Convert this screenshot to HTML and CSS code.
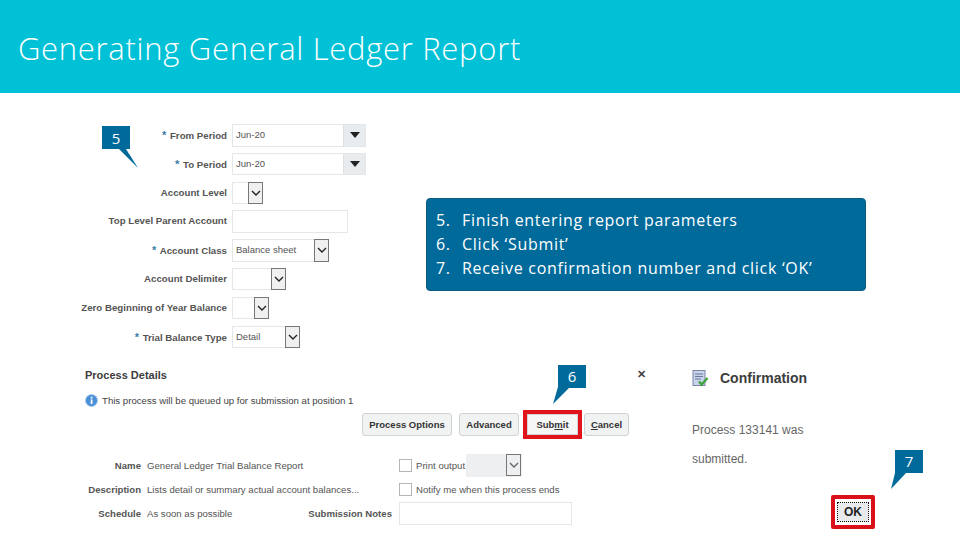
FILE: index.html
```html
<!DOCTYPE html>
<html lang="en">
<head>
    <meta charset="UTF-8">
    <title>Generating General Ledger Report</title>
    <link rel="stylesheet" href="styles.css">
</head>
<body>
    <div class="slide">
        <header class="title-bar">
            <h1>Generating General Ledger Report</h1>
        </header>

        <!-- parameters form -->
        <section class="shot params">
            <div class="param-label"><span class="req">*</span> From Period</div>
            <div class="lov w134"><span>Jun-20</span><i class="lov-btn"><svg width="10" height="6" viewBox="0 0 10 6"><path d="M0 0h10L5 6z"/></svg></i></div>
            <div class="param-label"><span class="req">*</span> To Period</div>
            <div class="lov w134"><span>Jun-20</span><i class="lov-btn"><svg width="10" height="6" viewBox="0 0 10 6"><path d="M0 0h10L5 6z"/></svg></i></div>
            <div class="param-label">Account Level</div>
            <div class="select w31"><span></span><i class="sel-btn"><svg width="10" height="6" viewBox="0 0 10 6"><path d="M1 1l4 4 4-4"/></svg></i></div>
            <div class="param-label">Top Level Parent Account</div>
            <div class="text-input w116"></div>
            <div class="param-label"><span class="req">*</span> Account Class</div>
            <div class="select w97"><span>Balance sheet</span><i class="sel-btn"><svg width="10" height="6" viewBox="0 0 10 6"><path d="M1 1l4 4 4-4"/></svg></i></div>
            <div class="param-label">Account Delimiter</div>
            <div class="select w54"><span></span><i class="sel-btn"><svg width="10" height="6" viewBox="0 0 10 6"><path d="M1 1l4 4 4-4"/></svg></i></div>
            <div class="param-label">Zero Beginning of Year Balance</div>
            <div class="select w37"><span></span><i class="sel-btn"><svg width="10" height="6" viewBox="0 0 10 6"><path d="M1 1l4 4 4-4"/></svg></i></div>
            <div class="param-label"><span class="req">*</span> Trial Balance Type</div>
            <div class="select w68"><span>Detail</span><i class="sel-btn"><svg width="10" height="6" viewBox="0 0 10 6"><path d="M1 1l4 4 4-4"/></svg></i></div>
        </section>

        <!-- steps box -->
        <div class="steps">
            <div class="step"><span class="step-num">5.</span>Finish entering report parameters</div>
            <div class="step"><span class="step-num">6.</span>Click ‘Submit’</div>
            <div class="step"><span class="step-num">7.</span>Receive confirmation number and click ‘OK’</div>
        </div>

        <!-- process details dialog -->
        <section class="shot process">
            <div class="process-head">
                <h2>Process Details</h2>
                <span class="close">✕</span>
            </div>
            <div class="info-line">
                <svg width="13" height="13" viewBox="0 0 13 13">
                    <circle cx="6.5" cy="6.5" r="6" fill="#4a90d9" stroke="#a9c8ea"/>
                    <rect x="5.7" y="5.4" width="1.8" height="4.6" fill="#fff"/>
                    <rect x="5.7" y="2.8" width="1.8" height="1.7" fill="#fff"/>
                </svg>
                <span>This process will be queued up for submission at position 1</span>
            </div>
            <div class="btn-row">
                <span class="btn b-options">Process Options</span>
                <span class="btn b-advanced">Advanced</span>
                <span class="hilite"><span class="btn b-submit">Sub<u>m</u>it</span></span>
                <span class="btn b-cancel"><u>C</u>ancel</span>
            </div>
            <div class="detail-rows">
                <div class="detail-row">
                    <label>Name</label>
                    <span class="value">General Ledger Trial Balance Report</span>
                    <i class="check"></i><span class="check-text">Print output</span>
                    <div class="print-select"><i class="sel-btn"><svg width="10" height="6" viewBox="0 0 10 6"><path d="M1 1l4 4 4-4"/></svg></i></div>
                </div>
                <div class="detail-row">
                    <label>Description</label>
                    <span class="value">Lists detail or summary actual account balances...</span>
                    <i class="check"></i><span class="check-text">Notify me when this process ends</span>
                </div>
                <div class="detail-row">
                    <label>Schedule</label>
                    <span class="value value-short">As soon as possible</span>
                    <label class="notes-label">Submission Notes</label>
                    <div class="text-input notes"></div>
                </div>
            </div>
        </section>

        <!-- confirmation dialog -->
        <section class="shot confirm">
            <div class="confirm-head">
                <svg width="17" height="17" viewBox="0 0 17 17">
                    <rect x="1" y="0.5" width="12" height="15" fill="#c9d3ea" stroke="#7a86a8"/>
                    <path d="M3 4h8M3 6.5h8M3 9h6" stroke="#6a78a0"/>
                    <path d="M7 11.5l2.6 3L15.5 8" fill="none" stroke="#3da33a" stroke-width="2.4"/>
                </svg>
                <h2>Confirmation</h2>
            </div>
            <p>Process 133141 was</p>
            <p>submitted.</p>
            <div class="ok-box"><span class="ok">OK</span></div>
        </section>

        <!-- numbered callouts -->
        <div class="callout c5">5
            <svg class="tail" width="20" height="20" viewBox="0 0 20 20"><path d="M0 0h7l12 19z"/></svg>
        </div>
        <div class="callout c6">6
            <svg class="tail" width="22" height="18" viewBox="0 0 22 18"><path d="M6 0h12L1 17z"/></svg>
        </div>
        <div class="callout c7">7
            <svg class="tail" width="22" height="18" viewBox="0 0 22 18"><path d="M5 0h11L1 16z"/></svg>
        </div>
    </div>
</body>
</html>
```

FILE: styles.css
```css
* {
    box-sizing: border-box;
}

body {
    margin: 0;
    background: #fff;
    font-family: "Liberation Sans", Arial, sans-serif;
    color: #444;
}

.slide {
    position: relative;
    width: 960px;
    height: 540px;
    overflow: hidden;
    background: #fff;
}

.title-bar {
    height: 93px;
    background: #00c1d6;
    padding: 27px 0 0 18px;
}

.title-bar h1 {
    margin: 0;
    font-family: "Open Sans", sans-serif;
    font-weight: 300;
    font-size: 31px;
    letter-spacing: 0.7px;
    line-height: 42px;
    color: #fff;
}

/* pieces of screenshot sit freely on the slide */
.shot {
    position: absolute;
}

.params {
    left: 72px;
    top: 124px;
    display: grid;
    grid-template-columns: 155px auto;
    column-gap: 5px;
    grid-auto-rows: 28.8px;
    justify-items: start;
}

.param-label {
    justify-self: end;
    font-size: 9.7px;
    font-weight: bold;
    line-height: 22px;
    color: #555;
    white-space: nowrap;
}

.req {
    color: #3a7ca5;
    font-size: 11px;
    margin-right: 1px;
}

.lov, .select, .text-input {
    display: flex;
    height: 22.5px;
    border: 1px solid #e3e7ea;
    background: #fff;
    font-size: 9.5px;
    line-height: 20px;
    color: #555;
}

.lov span, .select span {
    flex: 1;
    padding-left: 3px;
    white-space: nowrap;
}

.lov-btn {
    display: flex;
    align-items: center;
    justify-content: center;
    width: 22px;
    background: #e8ecef;
    border-left: 1px solid #dde1e4;
}

.lov-btn path {
    fill: #222;
}

.sel-btn {
    display: flex;
    align-items: center;
    justify-content: center;
    width: 15px;
    height: 22.5px;
    background: #f0f0f0;
    border: 1px solid #777;
    margin: -1px -1px -1px 0;
}

.sel-btn path {
    fill: none;
    stroke: #222;
    stroke-width: 1.4;
}

.w31 { width: 31px; }
.w37 { width: 37px; }
.w54 { width: 54px; }
.w68 { width: 68px; }
.w97 { width: 97px; }
.w116 { width: 116px; }
.w134 { width: 134px; }

.steps {
    position: absolute;
    left: 426px;
    top: 198px;
    width: 440px;
    height: 93px;
    padding: 9px 0 0 9px;
    background: #006a9b;
    border: 1px solid #0b5a80;
    border-radius: 4px;
    font-family: "Open Sans", sans-serif;
    font-size: 16px;
    letter-spacing: 0.7px;
    line-height: 24px;
    color: #fff;
}

.step {
    display: flex;
    white-space: nowrap;
}

.step-num {
    width: 26px;
    flex: none;
}

.process {
    left: 85px;
    top: 368px;
    width: 544px;
}

.process-head {
    display: flex;
    justify-content: space-between;
    height: 15px;
}

.process h2, .confirm h2 {
    margin: 0;
    font-size: 11px;
    line-height: 15px;
    color: #3c3c3c;
}

.close {
    margin-right: -17px;
    font-size: 11px;
    font-weight: bold;
    color: #444;
}

.info-line {
    display: flex;
    align-items: center;
    gap: 4px;
    margin-top: 10px;
    font-size: 9.65px;
    line-height: 15px;
}

.btn-row {
    display: flex;
    justify-content: flex-end;
    align-items: center;
    margin-top: 2px;
    height: 29px;
}

.btn {
    display: flex;
    align-items: center;
    justify-content: center;
    height: 23px;
    background: #f1f3f3;
    border: 1px solid #cfd3d5;
    border-radius: 3px;
    font-size: 9.5px;
    font-weight: bold;
    color: #333;
}

.b-options { width: 90px; margin-right: 7px; }
.b-advanced { width: 60px; margin-right: 4px; }
.b-cancel { width: 45px; margin-left: 2px; }

.hilite {
    display: block;
    width: 59px;
    height: 29px;
    border: 4px solid #e0121a;
}

.b-submit {
    height: 21px;
    border-radius: 0;
    background: #f6f6f6;
}

.detail-rows {
    margin-top: 14px;
}

.detail-row {
    display: flex;
    align-items: center;
    height: 24px;
    font-size: 9.6px;
}

.detail-row label {
    width: 56px;
    text-align: right;
    font-weight: bold;
    color: #555;
    flex: none;
}

.value {
    margin-left: 6px;
    width: 252px;
    flex: none;
    color: #555;
    white-space: nowrap;
}

.value-short {
    width: 145px;
}

.check {
    width: 13px;
    height: 13px;
    flex: none;
    background: #fff;
    border: 1px solid #b5b5b5;
}

.check-text {
    margin-left: 4px;
    color: #555;
    white-space: nowrap;
}

.print-select {
    display: flex;
    justify-content: flex-end;
    width: 56px;
    height: 23px;
    padding-right: 1px;
    margin-left: 1px;
    background: #eeeff0;
}

.print-select .sel-btn {
    margin: 0;
    background: #eeeff0;
}

.print-select .sel-btn path {
    stroke: #666;
}

.detail-row .notes-label {
    width: 100px;
    white-space: nowrap;
}

.notes {
    width: 173px;
    height: 23px;
    margin-left: 7px;
}

.confirm {
    left: 692px;
    top: 369px;
    width: 190px;
    height: 162px;
}

.confirm-head {
    display: flex;
    align-items: center;
    gap: 11px;
    height: 18px;
}

.confirm h2 {
    font-size: 14px;
    line-height: 18px;
}

.confirm p {
    margin: 0;
    font-size: 12px;
    line-height: 29px;
    color: #666;
}

.confirm-head + p {
    margin-top: 29px;
}

.ok-box {
    position: absolute;
    left: 139px;
    top: 126px;
    width: 44px;
    height: 34px;
    padding: 3px 2px;
    border: 4px solid #d9101a;
    border-radius: 2px;
}

.ok {
    display: flex;
    align-items: center;
    justify-content: center;
    height: 100%;
    background: #e9eaec;
    border: 1px dotted #111;
    font-size: 12px;
    font-weight: bold;
    color: #222;
}

.callout {
    position: absolute;
    width: 28px;
    height: 23px;
    background: #006a9b;
    color: #fff;
    font-family: "Open Sans", sans-serif;
    font-size: 15px;
    line-height: 23px;
    text-align: center;
}

.tail {
    position: absolute;
    display: block;
}

.tail path {
    fill: #006a9b;
}

.c5 { left: 102px; top: 126px; line-height: 25px; }
.c5 .tail { left: 17px; top: 23px; }
.c6 { left: 558px; top: 365px; }
.c6 .tail { left: -6px; top: 22px; }
.c7 { left: 895px; top: 450px; }
.c7 .tail { left: -5px; top: 23px; }
```
